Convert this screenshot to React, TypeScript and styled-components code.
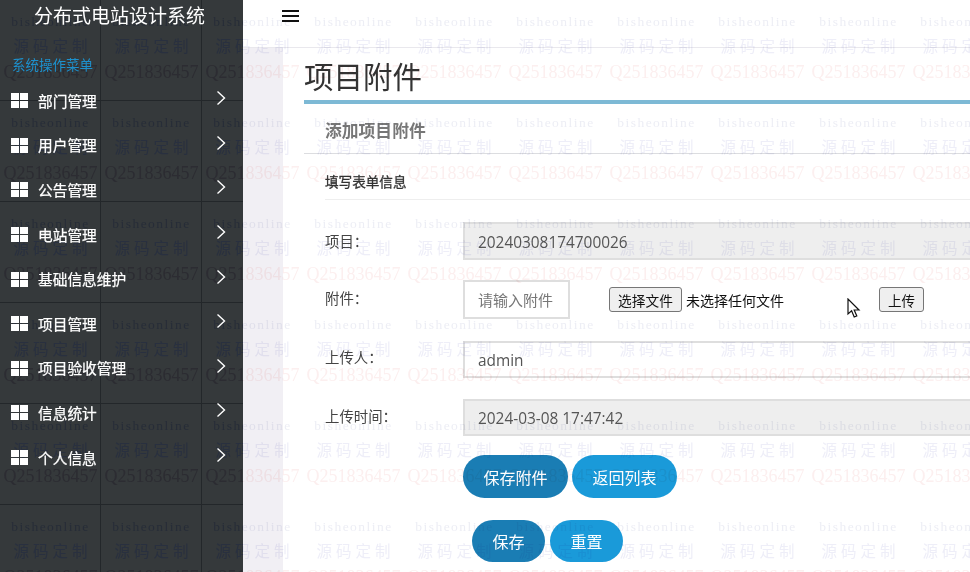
import React from "react";
import styled, { createGlobalStyle } from "styled-components";

const Global = createGlobalStyle`
  html, body { margin: 0; padding: 0; width: 970px; height: 572px; overflow: hidden; background: #fff; }
  * { box-sizing: border-box; }
  body { font-family: "Open Sans", "Noto Sans CJK SC", sans-serif; color: #333; }
`;

const Page = styled.div`
  position: relative;
  display: flex;
  width: 970px;
  height: 572px;
  overflow: hidden;
`;

const Sidebar = styled.aside`
  position: relative;
  flex: 0 0 243px;
  height: 572px;
  overflow: hidden;
  background-color: #35393b;
  background-image:
    linear-gradient(to right, transparent 100px, #23272a 100px, #23272a 101px, transparent 101px),
    linear-gradient(to bottom, transparent 100px, #23272a 100px, #23272a 101px, transparent 101px);
  background-size: 101px 101px;
`;

const SidebarContent = styled.div`
  position: relative;
  z-index: 1;
`;

const Brand = styled.h1`
  margin: 0;
  height: 32px;
  font-size: 19px;
  line-height: 32px;
  font-weight: 400;
  color: #fff;
  text-align: center;
  padding-right: 4px;
`;

const MenuCaption = styled.div`
  margin: 25px 0 0 12px;
  height: 17px;
  font-size: 13.5px;
  line-height: 17px;
  color: #1d90cc;
`;

const Menu = styled.ul`
  list-style: none;
  margin: 5px 0 0;
  padding: 0;
`;

const MenuRow = styled.li`
  display: flex;
  align-items: center;
  height: 44.6px;
  padding-left: 11px;
  color: #fff;
  font-size: 14.7px;
`;

const MenuIcon = styled.svg`
  width: 17px;
  height: 16px;
`;

const MenuLabel = styled.span`
  margin-left: 10px;
  flex: 1;
  position: relative;
  top: -1px;
  -webkit-text-stroke: 0.25px #fff;
`;

const Chevron = styled.svg`
  width: 10px;
  height: 16px;
  margin-right: 17px;
  position: relative;
  top: -3px;
`;

const Main = styled.main`
  position: relative;
  flex: 1;
  min-width: 0;
  display: flex;
  flex-direction: column;
`;

const TopBar = styled.header`
  flex: 0 0 48px;
  padding: 10px 0 0 39px;
  border-bottom: 1px solid #e9e8ed;
  background: #fff;
`;

const Hamburger = styled.div`
  width: 17px;
  height: 12px;
  border-top: 2px solid #111;
  border-bottom: 2px solid #111;
  position: relative;
  &::after {
    content: "";
    position: absolute;
    left: 0;
    right: 0;
    top: 3px;
    height: 2px;
    background: #111;
  }
`;

const Body = styled.div`
  flex: 1;
  display: flex;
`;

const Gutter = styled.div`
  flex: 0 0 40px;
  background: #f1eff4;
`;

const Content = styled.div`
  flex: 1;
  min-width: 0;
  padding-left: 21px;
  background: #fff;
`;

const PageTitle = styled.h2`
  margin: 0;
  padding-top: 6px;
  height: 56px;
  font-size: 29.5px;
  line-height: 46px;
  font-weight: 400;
  color: #333;
  border-bottom: 4px solid #7db9d5;
`;

const CardHeading = styled.h3`
  margin: 0;
  height: 50px;
  padding: 13px 0 0 21px;
  font-size: 16.8px;
  line-height: 27px;
  font-weight: 700;
  color: #777;
  border-bottom: 1px solid #dcdde0;
`;

const FormArea = styled.div`
  padding-left: 21px;
`;

const FormHeading = styled.h4`
  margin: 0;
  height: 46px;
  padding-top: 18px;
  font-size: 13.6px;
  line-height: 20px;
  font-weight: 400;
  -webkit-text-stroke: 0.3px #333;
  color: #333;
  border-bottom: 1px solid #eee;
`;

const FieldRow = styled.div<{ $top: number; $height: number }>`
  display: flex;
  align-items: center;
  margin-top: ${(p) => p.$top}px;
  height: ${(p) => p.$height}px;
`;

const FieldLabel = styled.label<{ $shift: number }>`
  flex: 0 0 138px;
  font-size: 14.4px;
  color: #444;
  position: relative;
  top: ${(p) => p.$shift}px;
`;

const TextField = styled.input<{ $narrow?: boolean }>`
  flex: none;
  width: ${(p) => (p.$narrow ? 107 : 560)}px;
  height: 100%;
  padding: 2px 13px 0;
  font: 15.4px "Open Sans", "Noto Sans CJK SC", sans-serif;
  color: #555;
  background: #fff;
  border: 2px solid #dedede;
  outline: 0;
  &:disabled { background: #eee; color: #555; opacity: 1; -webkit-text-fill-color: #555; }
  &::placeholder { color: #777; opacity: 1; font-size: 15px; }
`;

const FileButton = styled.button`
  flex: none;
  margin-left: 39px;
  width: 73px;
  height: 25px;
  padding: 0;
  font: 13.7px "Noto Sans CJK SC", sans-serif;
  color: #111;
  background: #efefef;
  border: 1px solid #767676;
  border-radius: 3px;
`;

const FileStatus = styled.span`
  flex: none;
  margin-left: 4px;
  font-size: 14px;
  color: #111;
  width: 193px;
`;

const UploadButton = styled.button`
  flex: none;
  width: 45px;
  height: 25px;
  padding: 0;
  font: 13.5px "Noto Sans CJK SC", sans-serif;
  color: #111;
  background: #efefef;
  border: 1px solid #767676;
  border-radius: 3px;
`;

const ActionRow = styled.div<{ $top: number; $indent: number; $gap: number }>`
  display: flex;
  gap: ${(p) => p.$gap}px;
  margin-top: ${(p) => p.$top}px;
  padding-left: ${(p) => p.$indent}px;
`;

const Pill = styled.button<{ $primary?: boolean; $w: number; $h: number }>`
  width: ${(p) => p.$w}px;
  height: ${(p) => p.$h}px;
  padding: 0;
  border: 0;
  border-radius: 24px;
  color: #fff;
  font: 16px "Noto Sans CJK SC", sans-serif;
  background: ${(p) => (p.$primary ? "#1a7db4" : "#1a9ad9")};
`;

const CursorMark = styled.svg`
  position: absolute;
  left: 847px;
  top: 298px;
  width: 14px;
  height: 21px;
`;

const WatermarkLayer = styled.div<{ $light?: boolean }>`
  position: absolute;
  inset: 0;
  overflow: hidden;
  pointer-events: none;
  mix-blend-mode: ${(p) => (p.$light ? "multiply" : "normal")};
`;

const TileGrid = styled.div<{ $offset: number }>`
  display: grid;
  grid-template-columns: repeat(10, 101px);
  grid-auto-rows: 101px;
  width: 1010px;
  margin-left: ${(p) => p.$offset}px;
`;

const Tile = styled.div`
  display: flex;
  flex-direction: column;
  align-items: center;
  padding-top: 13px;
  white-space: nowrap;
`;

const MarkSite = styled.span<{ $light?: boolean }>`
  height: 18px;
  line-height: 18px;
  font-family: "Liberation Serif", serif;
  font-size: 13.5px;
  letter-spacing: 1.5px;
  color: ${(p) => (p.$light ? "#edeef5" : "#272d38")};
`;

const MarkCode = styled.span<{ $light?: boolean }>`
  margin-top: 5px;
  height: 18px;
  line-height: 18px;
  font-family: "Noto Sans CJK SC", sans-serif;
  font-size: 15.5px;
  letter-spacing: 4px;
  padding-left: 4px;
  color: ${(p) => (p.$light ? "#eeeef8" : "#29303f")};
`;

const MarkPhone = styled.span<{ $light?: boolean }>`
  margin-top: 8px;
  height: 20px;
  line-height: 20px;
  font-family: "Liberation Serif", serif;
  font-size: 18px;
  color: ${(p) => (p.$light ? "#fcefef" : "#2c2c32")};
`;

const Watermark = ({ light, offset }: { light?: boolean; offset: number }) => (
  <WatermarkLayer $light={light}>
    <TileGrid $offset={offset}>
      {Array.from({ length: 60 }, (_, i) => (
        <Tile key={i}>
          <MarkSite $light={light}>bisheonline</MarkSite>
          <MarkCode $light={light}>源码定制</MarkCode>
          <MarkPhone $light={light}>Q251836457</MarkPhone>
        </Tile>
      ))}
    </TileGrid>
  </WatermarkLayer>
);

const menuItems = ["部门管理", "用户管理", "公告管理", "电站管理", "基础信息维护", "项目管理", "项目验收管理", "信息统计", "个人信息"];

export default function App() {
  return (
    <Page>
      <Global />
      <Sidebar>
        <Watermark offset={0} />
        <SidebarContent>
          <Brand>分布式电站设计系统</Brand>
          <MenuCaption>系统操作菜单</MenuCaption>
          <Menu>
            {menuItems.map((m) => (
              <MenuRow key={m}>
                <MenuIcon viewBox="0 0 17 16" fill="#fff">
                  <rect x="0" y="0" width="8" height="7" />
                  <rect x="9" y="0" width="8" height="7" />
                  <rect x="0" y="8" width="8" height="7" />
                  <rect x="9" y="8" width="8" height="7" />
                </MenuIcon>
                <MenuLabel>{m}</MenuLabel>
                <Chevron viewBox="0 0 10 16" fill="none" stroke="#fff" strokeWidth="1.4">
                  <path d="M1.5 1.5 L8.5 8 L1.5 14.5" />
                </Chevron>
              </MenuRow>
            ))}
          </Menu>
        </SidebarContent>
      </Sidebar>
      <Main>
        <TopBar>
          <Hamburger />
        </TopBar>
        <Body>
          <Gutter />
          <Content>
            <PageTitle>项目附件</PageTitle>
            <CardHeading>添加项目附件</CardHeading>
            <FormArea>
              <FormHeading>填写表单信息</FormHeading>
              <FieldRow $top={22} $height={38}>
                <FieldLabel $shift={-1}>项目：</FieldLabel>
                <TextField disabled value="20240308174700026" readOnly />
              </FieldRow>
              <FieldRow $top={20} $height={39}>
                <FieldLabel $shift={-2}>附件：</FieldLabel>
                <TextField $narrow placeholder="请输入附件" />
                <FileButton>选择文件</FileButton>
                <FileStatus>未选择任何文件</FileStatus>
                <UploadButton>上传</UploadButton>
              </FieldRow>
              <FieldRow $top={22} $height={37}>
                <FieldLabel $shift={-3}>上传人：</FieldLabel>
                <TextField value="admin" readOnly />
              </FieldRow>
              <FieldRow $top={21} $height={37}>
                <FieldLabel $shift={-2}>上传时间：</FieldLabel>
                <TextField disabled value="2024-03-08 17:47:42" readOnly />
              </FieldRow>
              <ActionRow $top={19} $indent={138} $gap={4}>
                <Pill $primary $w={105} $h={43}>保存附件</Pill>
                <Pill $w={105} $h={43}>返回列表</Pill>
              </ActionRow>
              <ActionRow $top={22} $indent={147} $gap={5}>
                <Pill $primary $w={73} $h={42}>保存</Pill>
                <Pill $w={73} $h={42}>重置</Pill>
              </ActionRow>
            </FormArea>
          </Content>
        </Body>
        <Watermark light offset={-243} />
      </Main>
      <CursorMark viewBox="0 0 14 21">
        <path d="M1 1 L1 16 L4.6 12.8 L7.2 19 L9.8 18 L7.2 12 L12 12 Z" fill="#fff" stroke="#111" strokeWidth="1.2" />
      </CursorMark>
    </Page>
  );
}
